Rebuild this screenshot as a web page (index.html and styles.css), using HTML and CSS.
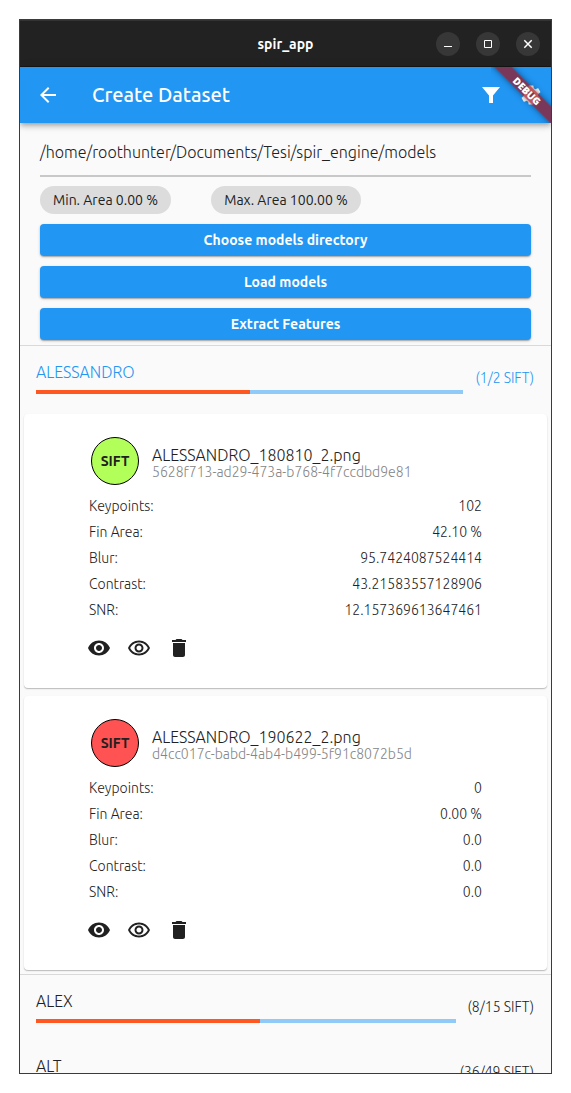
FILE: index.html
```html
<!DOCTYPE html>
<html lang="en">
<head>
<meta charset="utf-8">
<title>spir_app</title>
<link rel="stylesheet" href="styles.css">
</head>
<body>
<svg class="symbols" width="0" height="0">
  <symbol id="eye" viewBox="0 0 24 24"><path d="M12 4.5C7 4.5 2.73 7.61 1 12c1.73 4.39 6 7.5 11 7.5s9.27-3.11 11-7.5c-1.73-4.39-6-7.5-11-7.5zM12 17c-2.76 0-5-2.24-5-5s2.24-5 5-5 5 2.24 5 5-2.24 5-5 5zm0-8c-1.66 0-3 1.34-3 3s1.34 3 3 3 3-1.34 3-3-1.34-3-3-3z"/></symbol>
  <symbol id="eye-outline" viewBox="0 0 24 24"><path d="M12 6c3.79 0 7.17 2.13 8.82 5.5C19.17 14.87 15.79 17 12 17s-7.17-2.13-8.82-5.5C4.83 8.13 8.21 6 12 6m0-2C7 4 2.73 7.11 1 11.5 2.73 15.89 7 19 12 19s9.27-3.11 11-7.5C21.27 7.11 17 4 12 4zm0 5c1.38 0 2.5 1.12 2.5 2.5S13.38 14 12 14s-2.5-1.12-2.5-2.5S10.62 9 12 9m0-2c-2.48 0-4.5 2.02-4.5 4.5S9.52 16 12 16s4.5-2.02 4.5-4.5S14.48 7 12 7z" transform="translate(0 .5)"/></symbol>
  <symbol id="trash" viewBox="0 0 24 24"><path d="M6 19c0 1.1.9 2 2 2h8c1.1 0 2-.9 2-2V7H6v12zM19 4h-3.500l-1-1h-5l-1 1H5v2h14V4z"/></symbol>
</svg>
<div class="window">
  <header class="titlebar">
    <span class="window-title">spir_app</span>
    <div class="window-controls">
      <span class="control"><svg viewBox="0 0 24 24"><path d="M8 14.500h8"/></svg></span>
      <span class="control"><svg viewBox="0 0 24 24"><path d="M8.500 8.500h7v7h-7z"/></svg></span>
      <span class="control"><svg viewBox="0 0 24 24"><path d="M8.300 8.300l7.400 7.400M15.700 8.300l-7.400 7.400" stroke-width="1.500"/></svg></span>
    </div>
  </header>
  <nav class="appbar">
    <svg class="icon back" viewBox="0 0 24 24"><path d="M20 11H7.830l5.590-5.590L12 4l-8 8 8 8 1.410-1.410L7.830 13H20v-2z"/></svg>
    <h1 class="page-title">Create Dataset</h1>
    <svg class="icon filter" viewBox="0 0 24 24"><path d="M3 4h18l-7 8.500V20h-4v-7.500z"/></svg>
    <svg class="icon gear" viewBox="0 0 24 24"><path d="M19.140 12.940c.04-.3.060-.61.060-.94 0-.32-.02-.64-.07-.94l2.030-1.580c.18-.14.23-.41.120-.61l-1.920-3.320c-.12-.22-.37-.29-.59-.22l-2.390.96c-.5-.38-1.030-.7-1.620-.94l-.36-2.540c-.04-.24-.24-.41-.48-.41h-3.840c-.24 0-.43.170-.47.410l-.36 2.540c-.59.240-1.130.570-1.620.940l-2.390-.96c-.22-.08-.47 0-.59.220L2.740 8.870c-.12.210-.08.470.120.610l2.030 1.580c-.05.300-.09.630-.09.940s.02.640.070.940l-2.030 1.580c-.18.140-.23.410-.12.610l1.920 3.320c.12.220.37.290.59.220l2.390-.96c.5.380 1.030.7 1.620.94l.36 2.540c.05.240.24.410.48.410h3.840c.24 0 .44-.17.470-.41l.36-2.540c.59-.24 1.130-.56 1.620-.94l2.390.96c.22.080.47 0 .59-.22l1.920-3.320c.12-.22.070-.47-.12-.61l-2.010-1.580zM12 15.600A3.600 3.600 0 1 1 12 8.400a3.600 3.600 0 0 1 0 7.200z"/></svg>
    <div class="ribbon-area"><span class="ribbon">DEBUG</span></div>
  </nav>
  <main class="content">
    <section class="setup">
      <div class="path-field"><span class="path">/home/roothunter/Documents/Tesi/spir_engine/models</span></div>
      <div class="chips">
        <span class="chip chip-min"><span>Min. Area 0.00 %</span></span>
        <span class="chip chip-max"><span>Max. Area 100.00 %</span></span>
      </div>
      <div class="buttons">
        <button class="button choose">Choose models directory</button>
        <button class="button load">Load models</button>
        <button class="button extract">Extract Features</button>
      </div>
    </section>

    <section class="group open">
      <div class="group-header">
        <div class="group-main"><span class="group-name">ALESSANDRO</span><div class="progress"><div class="progress-fill" style="width:50%"></div></div></div>
        <span class="group-count">(1/2 SIFT)</span>
      </div>
      <article class="card">
        <div class="card-head">
          <span class="badge good">SIFT</span>
          <div class="file"><span class="file-name">ALESSANDRO_180810_2.png</span><span class="file-id">5628f713-ad29-473a-b768-4f7ccdbd9e81</span></div>
        </div>
        <dl class="stats">
          <div class="stat"><dt>Keypoints:</dt><dd>102</dd></div>
          <div class="stat"><dt>Fin Area:</dt><dd>42.10 %</dd></div>
          <div class="stat"><dt>Blur:</dt><dd>95.7424087524414</dd></div>
          <div class="stat"><dt>Contrast:</dt><dd>43.21583557128906</dd></div>
          <div class="stat"><dt>SNR:</dt><dd>12.157369613647461</dd></div>
        </dl>
        <div class="actions"><svg class="icon"><use href="#eye"/></svg><svg class="icon"><use href="#eye-outline"/></svg><svg class="icon"><use href="#trash"/></svg></div>
      </article>
      <article class="card">
        <div class="card-head">
          <span class="badge bad">SIFT</span>
          <div class="file"><span class="file-name">ALESSANDRO_190622_2.png</span><span class="file-id">d4cc017c-babd-4ab4-b499-5f91c8072b5d</span></div>
        </div>
        <dl class="stats">
          <div class="stat"><dt>Keypoints:</dt><dd>0</dd></div>
          <div class="stat"><dt>Fin Area:</dt><dd>0.00 %</dd></div>
          <div class="stat"><dt>Blur:</dt><dd>0.0</dd></div>
          <div class="stat"><dt>Contrast:</dt><dd>0.0</dd></div>
          <div class="stat"><dt>SNR:</dt><dd>0.0</dd></div>
        </dl>
        <div class="actions"><svg class="icon"><use href="#eye"/></svg><svg class="icon"><use href="#eye-outline"/></svg><svg class="icon"><use href="#trash"/></svg></div>
      </article>
    </section>

    <section class="group">
      <div class="group-header">
        <div class="group-main"><span class="group-name">ALEX</span><div class="progress"><div class="progress-fill" style="width:53.33%"></div></div></div>
        <span class="group-count">(8/15 SIFT)</span>
      </div>
    </section>
    <section class="group next">
      <div class="group-header">
        <div class="group-main"><span class="group-name">ALT</span><div class="progress"><div class="progress-fill" style="width:73%"></div></div></div>
        <span class="group-count">(36/49 SIFT)</span>
      </div>
    </section>
  </main>
</div>
</body>
</html>
```
FILE: styles.css
```css
* { box-sizing: border-box; }

body {
  margin: 0;
  height: 1093px;
  padding: 19px;
  overflow: hidden;
  background: #fff;
  color: #212121;
  font-family: Ubuntu, "Open Sans", "Noto Sans", sans-serif;
  font-weight: 300;
}

.symbols { position: absolute; }

.window {
  width: 533px;
  height: 1055px;
  border: 1px solid #3b3b3b;
  background: #fafafa;
  display: flex;
  flex-direction: column;
  overflow: hidden;
}

.titlebar {
  flex: none;
  height: 47px;
  display: grid;
  grid-template-columns: 1fr auto 1fr;
  align-items: center;
  background: #222;
  border-top: 1px solid #333;
  border-bottom: 1px solid #181818;
  color: #fff;
}

.window-title { grid-column: 2; font-size: 14px; font-weight: 600; letter-spacing: 0; line-height: 20px; }
.window-controls { display: flex; justify-content: flex-end; gap: 16px; padding-right: 11px; }
.control { width: 24px; height: 24px; border-radius: 50%; background: #373737; }
.control svg { display: block; width: 24px; height: 24px; fill: none; stroke: #fff; stroke-width: 1; }

.appbar {
  flex: none;
  position: relative;
  z-index: 1;
  height: 56px;
  display: flex;
  align-items: center;
  padding: 0 8px 0 16px;
  background: #2196f3;
  color: #fff;
  box-shadow: 0 2px 4px -1px rgba(0,0,0,.2), 0 4px 5px rgba(0,0,0,.14), 0 1px 10px rgba(0,0,0,.12);
}

.icon { display: block; flex: none; width: 24px; height: 24px; fill: currentColor; }
.page-title { flex: 1; margin: 0 0 0 32px; font-size: 20px; font-weight: 500; line-height: 28px; white-space: nowrap; }
.filter { margin-right: 16px; }
.ribbon-area { position: absolute; top: 0; right: 0; width: 60px; height: 60px; overflow: hidden; clip-path: inset(0 0 4px 0); }
.ribbon {
  position: absolute;
  top: 17.500px;
  left: -14px;
  width: 100px;
  height: 12px;
  transform: rotate(45deg);
  background: rgba(160,16,24,.7);
  box-shadow: 0 0 6px rgba(0,0,0,.5);
  font: 800 10px/12px "Open Sans", sans-serif;
  text-align: center;
}

.setup { height: 222px; padding: 0 20px; }
.path-field { height: 54px; padding-top: 17px; border-bottom: 2px solid #c8c8c8; }
.path { display: block; font-size: 16px; line-height: 24px; white-space: nowrap; }
.chips { display: flex; gap: 40px; padding-top: 9px; }
.chip { height: 28px; display: flex; align-items: center; justify-content: center; border-radius: 14px; background: #dcdcdc; font-size: 14px; font-weight: 400; white-space: nowrap; }
.chip-min { width: 131px; }
.chip-max { width: 150px; }
.buttons { display: flex; flex-direction: column; gap: 10px; padding-top: 10px; }
.button {
  height: 32px;
  padding: 0;
  border: 0;
  border-radius: 4px;
  background: #2196f3;
  color: #fff;
  font-family: inherit;
  font-size: 14px;
  font-weight: 600;
  box-shadow: 0 1px 3px rgba(0,0,0,.22), 0 1px 1px rgba(0,0,0,.18);
}

.group { border-top: 1px solid #d9d9d9; }
.next { border-top-color: transparent; }
.open { padding-bottom: 4px; }
.open .group-header { color: #2196f3; }
.group-header { height: 64px; display: flex; gap: 12px; padding: 14px 17px 0 16px; }
.group-main { flex: 1; }
.group-name { display: block; height: 24px; font-size: 16px; line-height: 24px; }
.progress { height: 4px; margin-top: 6px; background: #90caf9; }
.progress-fill { height: 4px; background: #ff5722; }
.group-count { padding-top: 8px; font-size: 14px; line-height: 20px; white-space: nowrap; }

.card {
  height: 274px;
  margin: 0 4px 8px;
  padding: 22px 65px 0;
  border-radius: 4px;
  background: #fff;
  box-shadow: 0 1px 1px rgba(0,0,0,.18), 0 1px 2px rgba(0,0,0,.1);
}
.open .group-header { height: 68px; }
.card:last-child { margin-bottom: 0; }
.card-head { display: flex; gap: 12px; padding: 1px 0 0 2px; }
.badge { flex: none; width: 48px; height: 48px; display: grid; place-items: center; border: 1px solid #000; border-radius: 50%; font-size: 14px; font-weight: 700; }
.good { background: #b2ff59; }
.bad { background: #ff5252; }
.file { display: flex; flex-direction: column; padding: 8px 0 0 1px; white-space: nowrap; }
.file-name { font-size: 16px; line-height: 20px; }
.file-id { height: 14px; font-size: 14px; line-height: 14px; color: #858585; }
.stats { margin: 0; padding-top: 8px; }
.stat { height: 26px; display: flex; justify-content: space-between; font-size: 14px; line-height: 26px; }
.stat dd { margin: 0; }
.actions { display: flex; gap: 16px; padding-top: 13px; margin-left: -2px; }
```
